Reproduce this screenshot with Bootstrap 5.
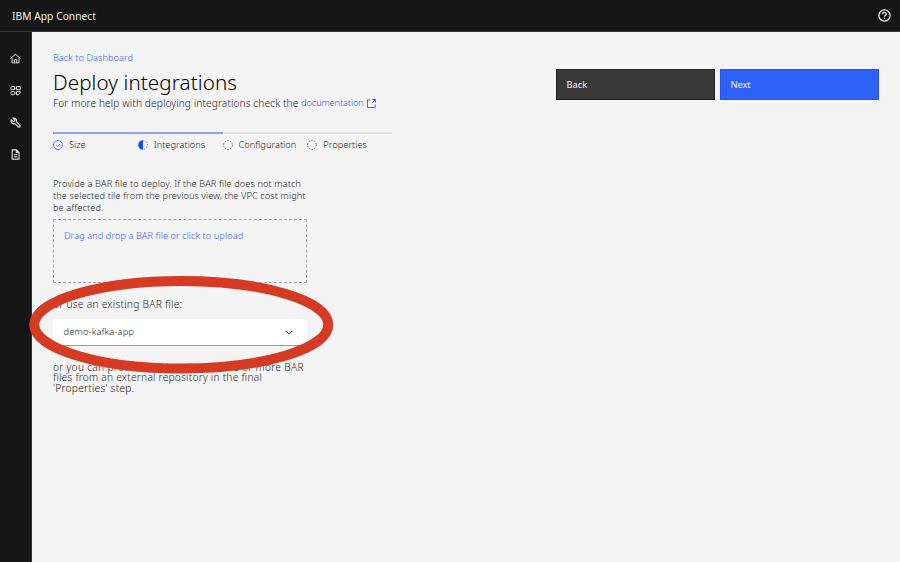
<!DOCTYPE html>
<html lang="en">
<head>
<meta charset="utf-8">
<meta name="viewport" content="width=device-width, initial-scale=1">
<title>IBM App Connect</title>
<link rel="stylesheet" href="https://cdn.jsdelivr.net/npm/bootstrap@5.3.0/dist/css/bootstrap.min.css">
<style>
body{font-family:"Noto Sans","Liberation Sans",sans-serif;font-weight:300;font-size:9.2px;line-height:14px;color:#262626;background:#f4f4f4;height:562px;overflow:hidden}
svg{display:block;flex:none;fill:none;stroke:currentColor}
a{color:#3558f2;text-decoration:none}
.app-header{height:32px;background:#161616;border-bottom:1px solid #393939;padding:0 9px 0 12px;color:#f4f4f4}
.brand-name{font-size:10.2px;font-weight:400;letter-spacing:.06px}
.side-rail{width:32px;background:#161616;border-right:1px solid #303030;color:#e0e0e0;padding-top:20.5px;gap:21px}
.side-rail svg{width:11px;height:11px}
.page-area{padding:19px 21px 0}
.back-link{letter-spacing:.06px}
.page-title{font-size:20.6px;line-height:26px;letter-spacing:.09px;font-weight:300;color:#000;margin:4px 0 1px}
.help-line{font-size:10.2px;letter-spacing:.1px}
.help-line a{font-size:9.3px;letter-spacing:-.14px;margin-left:2.5px}
.help-line svg{margin-left:3px}
.action-group{gap:5px;margin-top:18px}
.action-btn{width:159px;height:31px;border-radius:0;padding:0 9.5px;font-size:9.3px;font-weight:400;color:#f4f4f4}
.action-btn:hover{color:#fff}
.btn-back{background:#393939;border:1px solid #222;letter-spacing:.02px}
.btn-next{background:#2c60f6;border:1px solid #1f55f0;letter-spacing:-.1px}
.step-list{width:339px;margin-top:22px}
.step{width:84.75px;border-top:2px solid #e0e0e0;padding-top:4px;font-size:9.3px}
.step.done{border-color:#8fa0f8}
.step svg{width:10px;height:10px;margin-right:6px;color:#555}
.step.done svg{color:#3f62f6}
.form-col{width:254px;margin-top:26px}
.intro{line-height:12px;letter-spacing:.12px;margin:0 -4px 4.500px 0}
.drop-box{height:64px;border:1px dashed #a8a8a8;padding:9.500px 10px;letter-spacing:.08px}
.or-label{font-size:10.2px;letter-spacing:.27px;margin:14px 0 8.500px}
.bar-select{height:27px;background:#fff;border-bottom:1px solid #9c9c9c;padding:0 14px 0 10.500px;font-size:9.3px;letter-spacing:.14px}
.outro{font-size:10.2px;line-height:10.5px;letter-spacing:.24px;margin:15.500px 0 0}
.outro-lead{letter-spacing:.29px}
.highlight-ring{position:absolute;left:28px;top:273px;color:#d63a22}
</style>
</head>
<body class="d-flex flex-column position-relative">
<header class="app-header d-flex align-items-center justify-content-between flex-shrink-0">
  <span class="brand-name">IBM App Connect</span>
  <svg width="13" height="13" viewBox="0 0 13 13" stroke-width="1.25"><circle cx="6.5" cy="6.5" r="5.6"/><path d="M4.7 5.300V5c0-1 .8-1.600 1.800-1.600S8.300 4 8.300 5c0 1.300-1.800 1.200-1.800 2.700M6.500 8.700v1.200"/></svg>
</header>
<div class="d-flex flex-grow-1">
  <nav class="side-rail d-flex flex-column align-items-center flex-shrink-0">
    <svg viewBox="0 0 11 11"><path d="M.7 5.300 5.500 1.200l4.800 4.100M2 4.500v5.300h7V4.500M4.300 9.800V6.500h2.400v3.300"/></svg>
    <svg viewBox="0 0 11 11"><rect x="1" y="1.500" width="3.600" height="3.200" rx=".6"/><rect x="1" y="6.500" width="3.600" height="3.200" rx="1"/><path d="M6.500 1.500h3.700v3.200H6.500zM4.600 3.100h1.900M4.600 8.100h2.200M6.500 6.500h3.700v1.600L8.500 9.800h-2z"/></svg>
    <svg viewBox="0 0 11 11" stroke-width="1.100"><path d="M3.100 1.100 4.900 2.900 4.600 4.400 3.100 4.700 1.200 2.900C.5 5.300 2.500 7.100 4.700 6.400L8.300 10c1.100.7 2.500-.6 1.700-1.700L6.400 4.700C7 2.500 5.200.4 3.100 1.100Z"/></svg>
    <svg viewBox="0 0 11 11" stroke-width="1.100"><path d="M2.200.9h4.300l2.500 2.600v6.600H2.200zM6.300.9v2.800H9M3.800 5.700h3.600M3.800 7.800h3.600"/></svg>
  </nav>
  <main class="page-area flex-grow-1">
    <div class="d-flex justify-content-between">
      <div>
        <a class="back-link d-block" href="#">Back to Dashboard</a>
        <h1 class="page-title">Deploy integrations</h1>
        <div class="help-line d-flex align-items-center">
          <span>For more help with deploying integrations check the</span>
          <a class="d-flex align-items-center" href="#"><span>documentation</span>
            <svg width="9" height="9" viewBox="0 0 9 9" stroke-width=".9"><path d="M3.500.8H.5v7.700h7.700v-3M5.400.5h3.100v3.100M8.500.5 5 4"/></svg></a>
        </div>
      </div>
      <div class="action-group d-flex">
        <button class="btn action-btn btn-back text-start">Back</button>
        <button class="btn action-btn btn-next text-start">Next</button>
      </div>
    </div>
    <div class="step-list d-flex">
      <div class="step done d-flex align-items-center"><svg viewBox="0 0 10 10" stroke-width=".8"><circle cx="5" cy="5" r="4.500"/><path d="m3 5 1.500 1.500L7.200 3.800"/></svg>Size</div>
      <div class="step done d-flex align-items-center"><svg viewBox="0 0 10 10" stroke-width=".8"><path fill="#0f4cf5" stroke="none" d="M5 .2a4.800 4.800 0 0 0 0 9.600z"/><path stroke-dasharray="1.400 1.400" d="M5 .6a4.400 4.400 0 0 1 0 8.800"/></svg>Integrations</div>
      <div class="step d-flex align-items-center"><svg viewBox="0 0 10 10" stroke-width=".8"><circle cx="5" cy="5" r="4.400" stroke-dasharray="1.500 1.264"/></svg>Configuration</div>
      <div class="step d-flex align-items-center"><svg viewBox="0 0 10 10" stroke-width=".8"><circle cx="5" cy="5" r="4.400" stroke-dasharray="1.500 1.264"/></svg>Properties</div>
    </div>
    <div class="form-col">
      <p class="intro">Provide a BAR file to deploy. If the BAR file does not match<br>the selected tile from the previous view, the VPC cost might<br>be affected.</p>
      <div class="drop-box"><a href="#">Drag and drop a BAR file or click to upload</a></div>
      <div class="or-label">or use an existing BAR file:</div>
      <div class="bar-select d-flex align-items-center justify-content-between"><span>demo-kafka-app</span>
        <svg width="8" height="5" viewBox="0 0 8 5" stroke-width=".9"><path d="m.6.7 3.400 3.400L7.400.7"/></svg></div>
      <p class="outro text-nowrap"><span class="outro-lead">or you can provide the location of one or more BAR</span><br>files from an external repository in the final<br>'Properties' step.</p>
    </div>
  </main>
</div>
<svg class="highlight-ring" width="308" height="104" viewBox="28 273 308 104" stroke-width="10"><ellipse cx="181.300" cy="324.700" rx="147" ry="43.800"/></svg>
<script src="https://cdn.jsdelivr.net/npm/bootstrap@5.3.0/dist/js/bootstrap.bundle.min.js"></script>
</body>
</html>
